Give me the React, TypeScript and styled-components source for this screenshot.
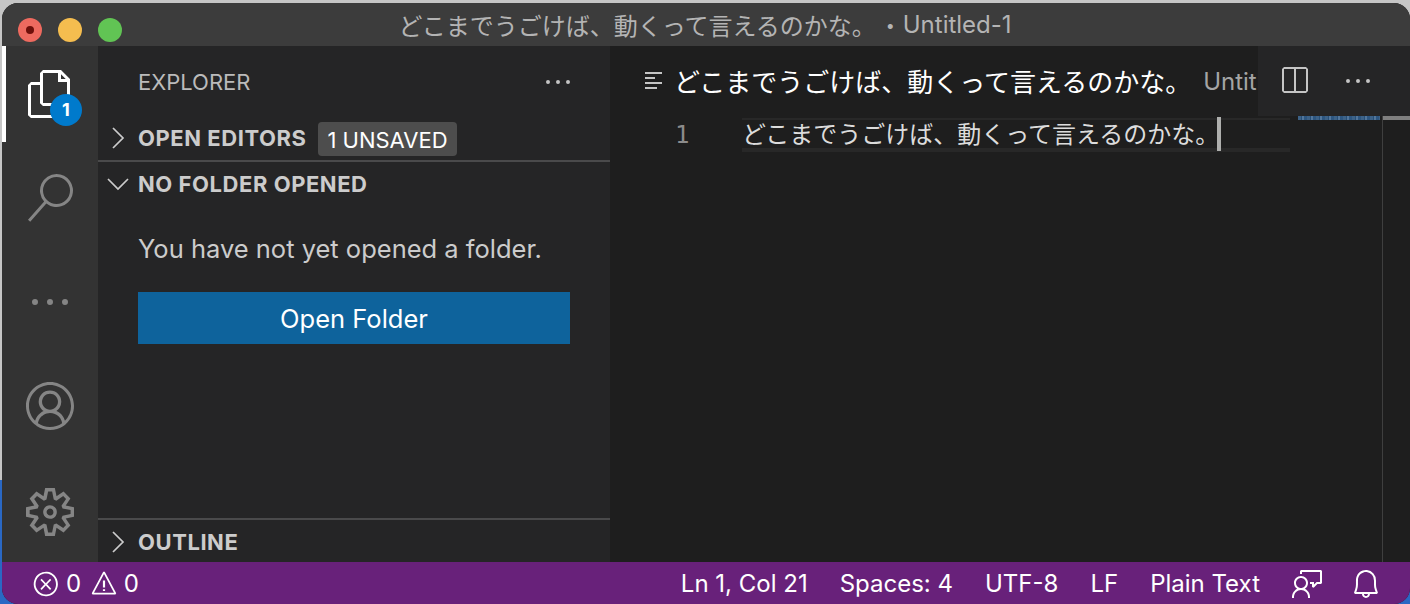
import React from 'react'
import styled, { createGlobalStyle } from 'styled-components'
import {
  VscAccount,
  VscBell,
  VscEllipsis,
  VscError,
  VscFeedback,
  VscFiles,
  VscSearch,
  VscSettingsGear,
  VscSplitHorizontal,
  VscWarning,
} from 'react-icons/vsc'

const UI_FONT = 'Inter, "Noto Sans CJK JP", sans-serif'
const TITLE = 'どこまでうごけば、動くって言えるのかな。'

const Global = createGlobalStyle`
  html, body {
    margin: 0;
    padding: 0;
    width: 1410px;
    height: 604px;
    overflow: hidden;
    background: linear-gradient(#c6c6c6 0, #c6c6c6 480px, #2a68c4 480px);
    font-family: ${UI_FONT};
  }
`

const Frame = styled.div`
  width: 1410px;
  height: 604px;
  box-sizing: border-box;
  padding: 3px 0 0 2px;
`
const Window = styled.div`
  height: 100%;
  display: flex;
  flex-direction: column;
  border-radius: 16px;
  overflow: hidden;
  background: #1e1e1e;
`
const TitleBar = styled.div`
  height: 43px;
  flex: none;
  position: relative;
  display: flex;
  align-items: center;
  justify-content: center;
  padding-right: 2px;
  background: #3c3c3c;
  color: #b4b4b4;
  font-size: 24px;
  white-space: pre;
`
const TitleDot = styled.span`
  font-size: 16px;
  margin: 0 8px 0 10px;
`
const Lights = styled.div`
  position: absolute;
  left: 16px;
  top: 15px;
  display: flex;
  gap: 16px;
`
const Light = styled.div<{ $color: string; $dot?: boolean }>`
  width: 24px;
  height: 24px;
  border-radius: 50%;
  background: ${(p) => p.$color};
  display: flex;
  align-items: center;
  justify-content: center;
  &::after {
    content: '';
    width: 8px;
    height: 8px;
    border-radius: 50%;
    background: ${(p) => (p.$dot ? '#6e0f0a' : 'transparent')};
  }
`
const Main = styled.div`
  flex: 1;
  min-height: 0;
  display: flex;
`
const ActivityBar = styled.nav`
  width: 96px;
  flex: none;
  display: flex;
  flex-direction: column;
  justify-content: space-between;
  padding-bottom: 2px;
  box-sizing: border-box;
  background: #333333;
`
const ActivityGroup = styled.div<{ $gap: number }>`
  display: flex;
  flex-direction: column;
  gap: ${(p) => p.$gap}px;
`
const ActivityItem = styled.div<{ $active?: boolean }>`
  height: 96px;
  position: relative;
  display: flex;
  align-items: center;
  justify-content: center;
  color: ${(p) => (p.$active ? '#ffffff' : '#858585')};
  &::before {
    content: '';
    display: ${(p) => (p.$active ? 'block' : 'none')};
    position: absolute;
    left: 0;
    top: 0;
    bottom: 0;
    width: 4px;
    background: #ffffff;
  }
`
const CountBadge = styled.span`
  position: absolute;
  left: 48px;
  top: 48px;
  width: 32px;
  height: 32px;
  border-radius: 50%;
  background: #007acc;
  color: #ffffff;
  font-size: 18px;
  font-weight: 700;
  line-height: 32px;
  text-align: center;
`
const SideBar = styled.aside`
  width: 512px;
  flex: none;
  display: flex;
  flex-direction: column;
  background: #252526;
  color: #cccccc;
`
const SideTitle = styled.div`
  height: 70px;
  flex: none;
  display: flex;
  align-items: center;
  justify-content: space-between;
  padding: 2px 36px 0 40px;
  box-sizing: border-box;
  font-size: 22px;
  color: #bbbbbb;
`
const SectionHeader = styled.div<{ $height: number; $divider?: boolean; $inset?: number }>`
  height: ${(p) => p.$height}px;
  flex: none;
  box-sizing: border-box;
  display: flex;
  align-items: center;
  gap: 8px;
  padding: ${(p) => p.$inset ?? 0}px 0 0 8px;
  font-size: 22px;
  font-weight: 700;
  letter-spacing: 0.55px;
  color: #cccccc;
  border-top: ${(p) => (p.$divider ? '2px solid #4a4a4b' : 'none')};
`
const Chevron = styled.svg`
  width: 24px;
  height: 24px;
  flex: none;
  fill: none;
  stroke: #cccccc;
  stroke-width: 1.7;
`
const UnsavedBadge = styled.span`
  margin: 2px 0 0 4px;
  padding: 0 9px;
  height: 34px;
  line-height: 36px;
  border-radius: 4px;
  background: #4d4d4d;
  color: #ffffff;
  font-size: 22px;
  font-weight: 400;
  letter-spacing: 0;
`
const FolderBody = styled.div`
  flex: 1;
  padding: 23px 40px 0;
`
const Message = styled.p`
  margin: 0 0 23px;
  font-size: 25.5px;
  line-height: 40px;
  color: #cccccc;
  white-space: nowrap;
`
const OpenButton = styled.button`
  width: 432px;
  height: 52px;
  display: block;
  border: 0;
  padding: 1px 0 0;
  background: #0e639c;
  color: #ffffff;
  font-family: inherit;
  font-size: 25.5px;
`
const Editor = styled.section`
  flex: 1;
  min-width: 0;
  display: flex;
  flex-direction: column;
`
const TabBar = styled.div`
  height: 70px;
  flex: none;
  display: flex;
  background: #252526;
`
const Tab = styled.div`
  width: 648px;
  flex: none;
  overflow: hidden;
  display: flex;
  align-items: center;
  gap: 11px;
  padding: 0 0 2px 35px;
  box-sizing: border-box;
  background: #1e1e1e;
  color: #ffffff;
  font-size: 26px;
  white-space: nowrap;
`
const TabHint = styled.span`
  margin: 2px 0 0 1px;
  font-size: 24px;
  color: #a5a5a5;
`
const TabActions = styled.div`
  flex: 1;
  display: flex;
  align-items: center;
  gap: 32px;
  padding-left: 20px;
  color: #c5c5c5;
`
const TabIcon = styled.svg`
  width: 18px;
  height: 18px;
  flex: none;
  fill: #c5c5c5;
`
const Surface = styled.div`
  flex: 1;
  min-height: 0;
  display: flex;
`
const Gutter = styled.div`
  width: 132px;
  flex: none;
  box-sizing: border-box;
  padding: 2px 0 0 65px;
  font: 24px/34px 'DejaVu Sans Mono', monospace;
  color: #8c8c8c;
`
const LineArea = styled.div`
  width: 548px;
  flex: none;
`
const CurrentLine = styled.div`
  height: 34px;
  margin-top: 2px;
  box-sizing: border-box;
  border: solid #282828;
  border-width: 2px 0 4px 0;
  display: flex;
  align-items: center;
  color: #dcdcdc;
  font-size: 24px;
  white-space: nowrap;
`
const LineText = styled.span`
  margin-top: -3px;
`
const Caret = styled.span`
  width: 4px;
  height: 34px;
  margin-left: -2px;
  background: #aeafad;
  flex: none;
`
const Minimap = styled.div`
  width: 92px;
  flex: none;
  &::before {
    content: '';
    display: block;
    margin-left: 8px;
    width: 82px;
    height: 4px;
    background: repeating-linear-gradient(90deg, #3d6287 0 3px, #264f78 3px 4px, #52769b 4px 6px, #2d5680 6px 9px);
  }
`
const Ruler = styled.div`
  flex: 1;
  border-left: 1px solid #3f3f3f;
  &::before {
    content: '';
    display: block;
    height: 4px;
    background: #7f7f7f;
  }
`
const StatusBar = styled.footer`
  height: 42px;
  flex: none;
  display: flex;
  align-items: center;
  justify-content: space-between;
  padding: 1px 28px 0 30px;
  box-sizing: border-box;
  background: #68217a;
  color: #ffffff;
  font-size: 24px;
  white-space: nowrap;
`
const StatusGroup = styled.div`
  display: flex;
  align-items: center;
  gap: 32px;
`
const StatusIcons = styled.div`
  display: flex;
  align-items: center;
  gap: 26px;
`
const ProblemGroup = styled.div`
  display: flex;
  align-items: center;
  gap: 6px;
  letter-spacing: 0.6px;
`
const WarningIcon = styled(VscWarning)`
  margin-left: 2px;
`

export default function App() {
  const right = <Chevron viewBox="0 0 24 24"><path d="M7 2l10 10L7 22" /></Chevron>
  const down = <Chevron viewBox="0 0 24 24"><path d="M2 7l10 10L22 7" /></Chevron>
  return (
    <Frame>
      <Global />
      <Window>
        <TitleBar>
          <Lights>
            <Light $color="#ee6a5f" $dot />
            <Light $color="#f5bd4f" />
            <Light $color="#61c454" />
          </Lights>
          {TITLE}<TitleDot>•</TitleDot>Untitled-1
        </TitleBar>
        <Main>
          <ActivityBar>
            <ActivityGroup $gap={8}>
              <ActivityItem $active>
                <VscFiles size={48} />
                <CountBadge>1</CountBadge>
              </ActivityItem>
              <ActivityItem><VscSearch size={48} /></ActivityItem>
              <ActivityItem><VscEllipsis size={48} /></ActivityItem>
            </ActivityGroup>
            <ActivityGroup $gap={10}>
              <ActivityItem><VscAccount size={48} /></ActivityItem>
              <ActivityItem><VscSettingsGear size={48} /></ActivityItem>
            </ActivityGroup>
          </ActivityBar>
          <SideBar>
            <SideTitle>
              EXPLORER
              <VscEllipsis size={32} color="#c5c5c5" />
            </SideTitle>
            <SectionHeader $height={44}>
              {right}
              OPEN EDITORS
              <UnsavedBadge>1 UNSAVED</UnsavedBadge>
            </SectionHeader>
            <SectionHeader $height={46} $divider>
              {down}
              NO FOLDER OPENED
            </SectionHeader>
            <FolderBody>
              <Message>You have not yet opened a folder.</Message>
              <OpenButton>Open Folder</OpenButton>
            </FolderBody>
            <SectionHeader $height={44} $divider $inset={2}>
              {right}
              OUTLINE
            </SectionHeader>
          </SideBar>
          <Editor>
            <TabBar>
              <Tab>
                <TabIcon viewBox="0 0 18 18">
                  <rect x="0" y="1" width="17" height="2" />
                  <rect x="0" y="6" width="10" height="2" />
                  <rect x="0" y="11" width="17" height="2" />
                  <rect x="0" y="16" width="12" height="2" />
                </TabIcon>
                {TITLE}
                <TabHint>Untitled-1</TabHint>
              </Tab>
              <TabActions>
                <VscSplitHorizontal size={32} />
                <VscEllipsis size={32} />
              </TabActions>
            </TabBar>
            <Surface>
              <Gutter>1</Gutter>
              <LineArea>
                <CurrentLine>
                  <LineText>{TITLE}</LineText>
                  <Caret />
                </CurrentLine>
              </LineArea>
              <Minimap />
              <Ruler />
            </Surface>
          </Editor>
        </Main>
        <StatusBar>
          <ProblemGroup>
            <VscError size={28} />0
            <WarningIcon size={28} />0
          </ProblemGroup>
          <StatusGroup>
            <span>Ln 1, Col 21</span>
            <span>Spaces: 4</span>
            <span>UTF-8</span>
            <span>LF</span>
            <span>Plain Text</span>
            <StatusIcons>
              <VscFeedback size={32} />
              <VscBell size={32} />
            </StatusIcons>
          </StatusGroup>
        </StatusBar>
      </Window>
    </Frame>
  )
}
